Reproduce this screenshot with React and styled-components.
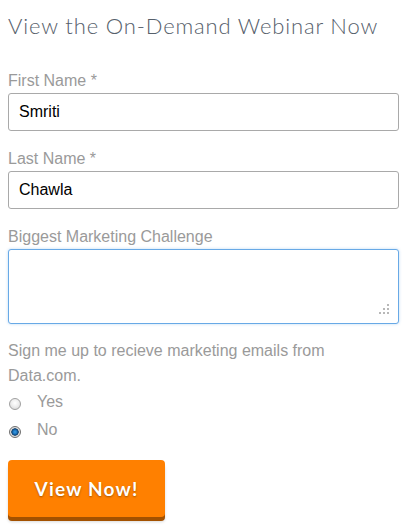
import React from "react";
import styled, { createGlobalStyle } from "styled-components";

const Global = createGlobalStyle`
  html, body { margin: 0; padding: 0; background: #fff; }
  body { font-family: "Liberation Sans", Arial, sans-serif; }
  * { box-sizing: border-box; }
`;

const Form = styled.form`
  display: flex;
  flex-direction: column;
  align-items: flex-start;
  padding: 12px 8px 8px 8px;
  width: 407px;
`;

const Title = styled.h2`
  margin: 0 0 31px 0;
  font-family: "Lato", "Open Sans", sans-serif;
  font-weight: 300;
  font-size: 22px;
  line-height: 28px;
  color: #56606b;
  letter-spacing: 0.85px;
`;

const Field = styled.div`
  display: flex;
  flex-direction: column;
  margin-bottom: ${(p) => (p.$gap != null ? p.$gap : 18)}px;
`;

const Label = styled.label`
  font-size: 16px;
  line-height: 20px;
  color: #9a9a9a;
  margin-bottom: 2px;
`;

const Input = styled.input`
  height: 38px;
  width: 391px;
  border: 1px solid #a9a9a9;
  border-radius: 3px;
  padding: 0 10px;
  font-family: "Liberation Sans", Arial, sans-serif;
  font-size: 16px;
  color: #000;
  outline: none;
`;

const AreaWrap = styled.div`
  position: relative;
  width: 391px;
  height: 75px;
`;

const TextArea = styled.textarea`
  display: block;
  height: 75px;
  width: 391px;
  border: 1px solid #68a9e6;
  border-radius: 3px;
  box-shadow: 0 0 3px rgba(104, 169, 230, 0.45);
  padding: 6px 10px;
  font-family: "Liberation Sans", Arial, sans-serif;
  font-size: 16px;
  outline: none;
  resize: none;
`;

const Grip = styled.svg`
  position: absolute;
  right: 9px;
  bottom: 9px;
  width: 12px;
  height: 12px;
  pointer-events: none;
`;

const Prompt = styled.p`
  margin: 0;
  font-size: 16px;
  line-height: 25px;
  color: #9a9a9a;
  width: 340px;
`;

const RadioRow = styled.label`
  display: flex;
  align-items: center;
  height: 28px;
  font-size: 16px;
  color: #9a9a9a;
  gap: 16px;
`;

const Radio = styled.input`
  appearance: none;
  -webkit-appearance: none;
  margin: 4px 0 0 1px;
  width: 12px;
  height: 12px;
  border-radius: 50%;
  border: 1px solid #a0a0a0;
  background: radial-gradient(circle at 50% 40%, #ffffff 0%, #eeeeee 45%, #d2d2d2 100%);
  &:checked {
    border-color: #6f6f6f;
    background: radial-gradient(circle at 50% 50%, #3aa0e8 0%, #1a6fb8 30%, #0c3a66 48%, #d8d8d8 56%, #f2f2f2 100%);
  }
`;

const Button = styled.button`
  margin-top: 16px;
  width: 157px;
  height: 57px;
  border: none;
  border-radius: 4px;
  background: #ff8000;
  box-shadow: 0 4px 0 #a35100, 0 5px 3px rgba(0,0,0,0.15);
  color: #fff;
  font-family: "Lato", "Open Sans", sans-serif;
  font-weight: 700;
  font-size: 19px;
  letter-spacing: 1.2px;
  text-shadow: 0 1px 2px rgba(0,0,0,0.35);
  cursor: pointer;
`;

const dots = [
  [10, 2],
  [6, 6], [10, 6],
  [2, 10], [6, 10], [10, 10],
];

export default function App() {
  return (
    <>
      <Global />
      <Form onSubmit={(e) => e.preventDefault()}>
        <Title>View the On-Demand Webinar Now</Title>
        <Field>
          <Label>First Name *</Label>
          <Input defaultValue="Smriti" />
        </Field>
        <Field>
          <Label>Last Name *</Label>
          <Input defaultValue="Chawla" />
        </Field>
        <Field $gap={14}>
          <Label>Biggest Marketing Challenge</Label>
          <AreaWrap>
            <TextArea />
            <Grip viewBox="0 0 12 12">
              {dots.map(([x, y], i) => (
                <rect key={i} x={x - 1} y={y - 1} width="2" height="2" fill="#b8b8b8" />
              ))}
            </Grip>
          </AreaWrap>
        </Field>
        <Prompt>Sign me up to recieve marketing emails from Data.com.</Prompt>
        <RadioRow>
          <Radio type="radio" name="optin" />
          Yes
        </RadioRow>
        <RadioRow>
          <Radio type="radio" name="optin" defaultChecked />
          No
        </RadioRow>
        <Button type="submit">View Now!</Button>
      </Form>
    </>
  );
}
